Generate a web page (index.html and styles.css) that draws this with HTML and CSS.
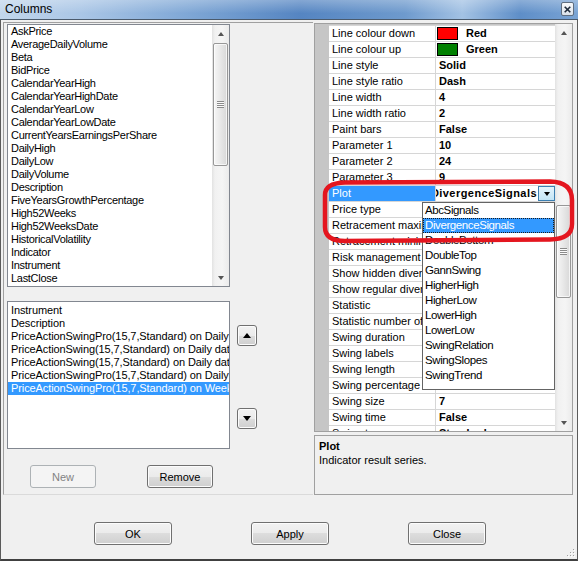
FILE: index.html
```html
<!DOCTYPE html>
<html lang="en">
<head>
<meta charset="utf-8">
<title>Columns</title>
<link rel="stylesheet" href="styles.css">
</head>
<body>
<div class="window">
  <div class="titlebar">
    <span class="title">Columns</span>
    <span class="close-btn"><svg width="7" height="7" viewBox="0 0 7 7"><path d="M0.7 0.7 L6.3 6.3 M6.3 0.7 L0.7 6.3" stroke="#1e2a3a" stroke-width="1.6"/></svg></span>
  </div>
  <div class="client">
    <div class="split">
      <div class="left-panel">
        <div class="list list-top">
          <div class="items">
            <div class="item">AskPrice</div>
            <div class="item">AverageDailyVolume</div>
            <div class="item">Beta</div>
            <div class="item">BidPrice</div>
            <div class="item">CalendarYearHigh</div>
            <div class="item">CalendarYearHighDate</div>
            <div class="item">CalendarYearLow</div>
            <div class="item">CalendarYearLowDate</div>
            <div class="item">CurrentYearsEarningsPerShare</div>
            <div class="item">DailyHigh</div>
            <div class="item">DailyLow</div>
            <div class="item">DailyVolume</div>
            <div class="item">Description</div>
            <div class="item">FiveYearsGrowthPercentage</div>
            <div class="item">High52Weeks</div>
            <div class="item">High52WeeksDate</div>
            <div class="item">HistoricalVolatility</div>
            <div class="item">Indicator</div>
            <div class="item">Instrument</div>
            <div class="item">LastClose</div>
          </div>
          <div class="vscroll">
            <div class="sb-btn"><span class="glyph-up"></span></div>
            <div class="sb-track"><div class="thumb thumb-list"><span class="grip"></span></div></div>
            <div class="sb-btn"><span class="glyph-down"></span></div>
          </div>
        </div>
        <div class="mid-row">
          <div class="list list-bottom">
            <div class="items">
              <div class="item">Instrument</div>
              <div class="item">Description</div>
              <div class="item">PriceActionSwingPro(15,7,Standard) on Daily data</div>
              <div class="item">PriceActionSwing(15,7,Standard) on Daily data</div>
              <div class="item">PriceActionSwing(15,7,Standard) on Daily data</div>
              <div class="item">PriceActionSwingPro(15,7,Standard) on Daily data</div>
              <div class="item sel">PriceActionSwingPro(15,7,Standard) on Weekly data</div>
            </div>
          </div>
          <div class="move-col">
            <button class="btn move move-up"><span class="tri-up"></span></button>
            <button class="btn move move-down"><span class="tri-down"></span></button>
          </div>
        </div>
        <div class="lbtns">
          <button class="btn small disabled">New</button>
          <button class="btn small">Remove</button>
        </div>
      </div>
      <div class="right-panel">
        <div class="pgrid">
          <div class="rows">
            <div class="row"><span class="m"></span><span class="name">Line colour down</span><span class="val swatched"><span class="swatch red"></span>Red</span></div>
            <div class="row"><span class="m"></span><span class="name">Line colour up</span><span class="val swatched"><span class="swatch green"></span>Green</span></div>
            <div class="row"><span class="m"></span><span class="name">Line style</span><span class="val">Solid</span></div>
            <div class="row"><span class="m"></span><span class="name">Line style ratio</span><span class="val">Dash</span></div>
            <div class="row"><span class="m"></span><span class="name">Line width</span><span class="val">4</span></div>
            <div class="row"><span class="m"></span><span class="name">Line width ratio</span><span class="val">2</span></div>
            <div class="row"><span class="m"></span><span class="name">Paint bars</span><span class="val">False</span></div>
            <div class="row"><span class="m"></span><span class="name">Parameter 1</span><span class="val">10</span></div>
            <div class="row"><span class="m"></span><span class="name">Parameter 2</span><span class="val">24</span></div>
            <div class="row"><span class="m"></span><span class="name">Parameter 3</span><span class="val">9</span></div>
            <div class="row"><span class="m"></span><span class="name sel">Plot</span><span class="val edit"><span class="edit-text"><span class="edit-value">DivergenceSignals</span></span><span class="dd-btn"><span class="tri-down-sm"></span></span></span></div>
            <div class="row"><span class="m"></span><span class="name">Price type</span><span class="val"></span></div>
            <div class="row"><span class="m"></span><span class="name">Retracement maximum</span><span class="val"></span></div>
            <div class="row"><span class="m"></span><span class="name">Retracement minimum</span><span class="val"></span></div>
            <div class="row"><span class="m"></span><span class="name">Risk management</span><span class="val"></span></div>
            <div class="row"><span class="m"></span><span class="name">Show hidden divergences</span><span class="val"></span></div>
            <div class="row"><span class="m"></span><span class="name">Show regular divergences</span><span class="val"></span></div>
            <div class="row"><span class="m"></span><span class="name">Statistic</span><span class="val"></span></div>
            <div class="row"><span class="m"></span><span class="name">Statistic number of swings</span><span class="val"></span></div>
            <div class="row"><span class="m"></span><span class="name">Swing duration</span><span class="val"></span></div>
            <div class="row"><span class="m"></span><span class="name">Swing labels</span><span class="val"></span></div>
            <div class="row"><span class="m"></span><span class="name">Swing length</span><span class="val"></span></div>
            <div class="row"><span class="m"></span><span class="name">Swing percentage</span><span class="val"></span></div>
            <div class="row"><span class="m"></span><span class="name">Swing size</span><span class="val">7</span></div>
            <div class="row"><span class="m"></span><span class="name">Swing time</span><span class="val">False</span></div>
            <div class="row"><span class="m"></span><span class="name">Swing type</span><span class="val">Standard</span></div>
          </div>
          <div class="vscroll">
            <div class="sb-btn"><span class="glyph-up"></span></div>
            <div class="sb-track"><div class="thumb thumb-grid"><span class="grip"></span></div></div>
            <div class="sb-btn"><span class="glyph-down"></span></div>
          </div>
          <div class="dropdown">
            <div class="dd-item">AbcSignals</div>
            <div class="dd-item sel">DivergenceSignals</div>
            <div class="dd-item">DoubleBottom</div>
            <div class="dd-item">DoubleTop</div>
            <div class="dd-item">GannSwing</div>
            <div class="dd-item">HigherHigh</div>
            <div class="dd-item">HigherLow</div>
            <div class="dd-item">LowerHigh</div>
            <div class="dd-item">LowerLow</div>
            <div class="dd-item">SwingRelation</div>
            <div class="dd-item">SwingSlopes</div>
            <div class="dd-item">SwingTrend</div>
          </div>
        </div>
        <div class="desc">
          <div class="desc-title">Plot</div>
          <div>Indicator result series.</div>
        </div>
      </div>
    </div>
    <div class="footer">
      <button class="btn big">OK</button>
      <button class="btn big">Apply</button>
      <button class="btn big">Close</button>
    </div>
    <svg class="size-grip" width="10" height="10" viewBox="0 0 10 10">
      <g fill="#fff"><rect x="8" y="2" width="1" height="1"/><rect x="8" y="5" width="1" height="1"/><rect x="5" y="5" width="1" height="1"/><rect x="8" y="8" width="1" height="1"/><rect x="5" y="8" width="1" height="1"/><rect x="2" y="8" width="1" height="1"/></g>
      <g fill="#a0a0a0"><rect x="7" y="1" width="1" height="1"/><rect x="7" y="4" width="1" height="1"/><rect x="4" y="4" width="1" height="1"/><rect x="7" y="7" width="1" height="1"/><rect x="4" y="7" width="1" height="1"/><rect x="1" y="7" width="1" height="1"/></g>
    </svg>
  </div>
  <svg class="annot" width="256" height="68" viewBox="0 0 256 68">
    <path d="M 24 4.5 L 229 3.5 Q 251 4 251 22 L 251 46 Q 251 61 229 61.5 L 24 63 Q 4 63 4 49 L 4 17 Q 4 5 24 4.5 Z" fill="none" stroke="#e4161f" stroke-width="4.5" stroke-linejoin="round"/>
  </svg>
</div>
</body>
</html>
```

FILE: styles.css
```css
* { box-sizing: border-box; }
html, body { margin: 0; padding: 0; }
body {
  width: 578px;
  height: 561px;
  overflow: hidden;
  background: #f0f0f0;
  font-family: "Liberation Sans", Arial, sans-serif;
  font-size: 11px;
  color: #000;
}
.window {
  position: relative;
  width: 578px;
  height: 561px;
  display: flex;
  flex-direction: column;
}
.titlebar {
  height: 20px;
  flex: none;
  display: flex;
  align-items: center;
  justify-content: space-between;
  padding: 0 4px 1px 5px;
  border-bottom: 1px solid #4a5a6c;
  background:
    linear-gradient(to bottom, rgba(255,255,255,0.28), rgba(255,255,255,0) 70%),
    linear-gradient(to right, #c2d6ec 0%, #aac6e6 14%, #80a8d6 32%, #5585c2 52%, #6e9acd 70%, #a3c2e4 80%, #5e8ec8 90%, #7aa4d4 100%);
}
.title { font-size: 12px; color: #000; }
.close-btn {
  width: 13px;
  height: 14px;
  border: 1px solid #5f6e80;
  border-radius: 2px;
  background: linear-gradient(#f7f9fb, #d9e1ea);
  display: flex;
  align-items: center;
  justify-content: center;
}
.client {
  position: relative;
  flex: 1;
  display: flex;
  flex-direction: column;
  padding: 2px 4px 0 2px;
  border-left: 1px solid #5a5a5a;
  border-right: 1px solid #5a5a5a;
  border-bottom: 2px solid #404040;
  background: #f0f0f0;
}
.split { display: flex; height: 473px; flex: none; }

/* left side */
.left-panel {
  width: 310px;
  flex: none;
  display: flex;
  flex-direction: column;
  padding: 1px 0 0 3px;
  border-left: 1px solid #a0a0a0;
  border-top: 1px solid #a0a0a0;
  border-bottom: 1px solid #dadada;
}
.list {
  width: 223px;
  flex: none;
  display: flex;
  background: #fff;
  border: 1px solid #828790;
}
.list-top { height: 263px; }
.list-bottom { height: 148px; padding-top: 2px; }
.items { flex: 1; min-width: 0; letter-spacing: -0.3px; }
.list-bottom .items { letter-spacing: -0.1px; }
.item {
  height: 13px;
  line-height: 13px;
  padding-left: 3px;
  white-space: nowrap;
  overflow: hidden;
}
.item.sel { background: #3399ff; color: #fff; }

.vscroll {
  width: 17px;
  flex: none;
  display: flex;
  flex-direction: column;
  background: linear-gradient(to right, #e2e2e2 0, #f1f1f1 3px, #f5f5f5 60%, #ebebeb 100%);
}
.sb-btn {
  height: 17px;
  flex: none;
  display: flex;
  align-items: center;
  justify-content: center;
}
.sb-track { flex: 1; }
.thumb {
  margin: 0 1px;
  border: 1px solid #979797;
  border-radius: 2px;
  background: linear-gradient(to right, #f6f6f6, #e9e9e9 45%, #d8d8d8 100%);
  box-shadow: inset 0 0 0 1px rgba(255,255,255,0.7);
  display: flex;
  align-items: center;
  justify-content: center;
}
.thumb-list { margin-top: 1px; height: 123px; }
.thumb-grid { margin-top: 164px; height: 93px; }
.grip {
  width: 7px;
  height: 7px;
  background: repeating-linear-gradient(to bottom, #8a8a8a 0 1px, #fbfbfb 1px 2px);
}
.glyph-up {
  width: 0; height: 0;
  border-left: 3.5px solid transparent;
  border-right: 3.5px solid transparent;
  border-bottom: 4px solid #555;
}
.glyph-down {
  width: 0; height: 0;
  border-left: 3.5px solid transparent;
  border-right: 3.5px solid transparent;
  border-top: 4px solid #555;
}

.mid-row { display: flex; margin-top: 14px; }
.move-col { display: flex; flex-direction: column; margin-left: 7px; }

.btn {
  font-family: "Liberation Sans", Arial, sans-serif;
  font-size: 11px;
  color: #000;
  padding: 0;
  border: 1px solid #707070;
  border-radius: 3px;
  background: linear-gradient(#f2f2f2 0%, #ebebeb 50%, #dddddd 50%, #cfcfcf 100%);
  box-shadow: inset 0 0 0 1px #fcfcfc;
}
.btn.move {
  width: 20px;
  height: 21px;
  display: flex;
  align-items: center;
  justify-content: center;
}
.move-up { margin-top: 24px; }
.move-down { margin-top: 62px; }
.tri-up {
  width: 0; height: 0;
  border-left: 4px solid transparent;
  border-right: 4px solid transparent;
  border-bottom: 5px solid #000;
}
.tri-down {
  width: 0; height: 0;
  border-left: 4px solid transparent;
  border-right: 4px solid transparent;
  border-top: 5px solid #000;
}
.lbtns { display: flex; gap: 51px; margin-top: 16px; padding-left: 23px; }
.btn.small { width: 66px; height: 23px; }
.btn.disabled {
  border-color: #adb2b5;
  background: #f4f4f4;
  color: #838383;
  box-shadow: none;
}

/* right side */
.right-panel {
  width: 259px;
  flex: none;
  margin-left: 1px;
  padding-top: 1px;
  display: flex;
  flex-direction: column;
  gap: 3px;
}
.pgrid {
  position: relative;
  height: 409px;
  flex: none;
  display: flex;
  border: 1px solid #a0a0a0;
  background: #fff;
}
.rows {
  width: 240px;
  flex: none;
  overflow: hidden;
  padding-top: 1px;
  background: #c6c6c6;
}
.row { display: flex; height: 16px; }
.m { width: 14px; flex: none; }
.name {
  width: 107px;
  flex: none;
  padding-left: 3px;
  line-height: 15px;
  white-space: nowrap;
  overflow: hidden;
  background: #fff;
  border-top: 1px solid #d6d6d6;
  border-right: 1px solid #d6d6d6;
}
.name.sel { background: #3399ff; color: #fff; }
.val {
  width: 119px;
  flex: none;
  display: flex;
  align-items: flex-start;
  padding-left: 3px;
  line-height: 15px;
  font-weight: bold;
  white-space: nowrap;
  overflow: hidden;
  background: #fff;
  border-top: 1px solid #d6d6d6;
}
.val.swatched { padding-left: 1px; }
.swatch {
  width: 21px;
  height: 13px;
  flex: none;
  margin: 1px 8px 0 0;
  border: 1px solid #000;
}
.red { background: #ff0000; }
.green { background: #008000; }
.val.edit { padding-left: 0; }
.edit-text {
  flex: 1;
  min-width: 0;
  display: flex;
  justify-content: flex-end;
  overflow: hidden;
  padding-right: 1px;
}
.edit-value { letter-spacing: 0.45px; }
.dd-btn {
  width: 17px;
  height: 15px;
  flex: none;
  display: flex;
  align-items: center;
  justify-content: center;
  border: 1px solid #3c7fb1;
  background: linear-gradient(#e5f4fc, #c4e5f6);
}
.tri-down-sm {
  width: 0; height: 0;
  border-left: 3.5px solid transparent;
  border-right: 3.5px solid transparent;
  border-top: 4px solid #000;
}
.dropdown {
  position: absolute;
  left: 107px;
  top: 178px;
  width: 133px;
  height: 188px;
  background: #fff;
  border: 1px solid #646464;
}
.dd-item {
  height: 15px;
  line-height: 15px;
  padding-left: 2px;
  font-size: 11.5px;
  letter-spacing: -0.4px;
  white-space: nowrap;
}
.dd-item.sel {
  background: #3399ff;
  color: #fff;
  outline: 1px dotted #1a1a1a;
  outline-offset: -1px;
}
.desc {
  height: 60px;
  flex: none;
  padding: 3px 4px;
  line-height: 14px;
  border: 1px solid #a0a0a0;
  background: #f0f0f0;
}
.desc-title { font-weight: bold; }

/* footer */
.footer {
  height: 64px;
  flex: none;
  display: flex;
  align-items: flex-start;
  gap: 79px;
  padding: 27px 0 0 91px;
}
.btn.big { width: 78px; height: 23px; }
.size-grip { position: absolute; right: 1px; bottom: 1px; }

.annot {
  position: absolute;
  left: 321px;
  top: 178px;
  pointer-events: none;
}
```
